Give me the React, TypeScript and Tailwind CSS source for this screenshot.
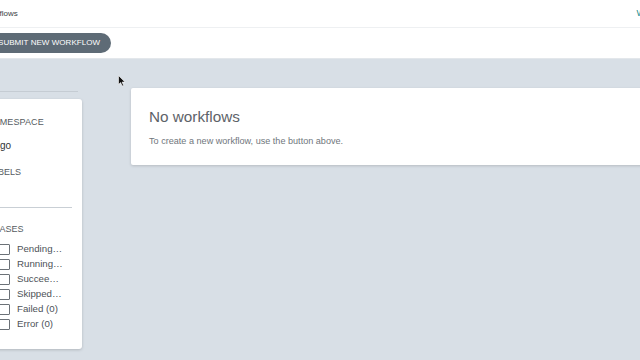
import React from "react";

const phases = ["Pending…", "Running…", "Succee…", "Skipped…", "Failed (0)", "Error (0)"];

export default function App() {
  return (
    <div
      className="relative w-[640px] h-[360px] overflow-hidden bg-[#d8dfe6] text-[#4a4f55]"
      style={{ fontFamily: '"Liberation Sans", Arial, sans-serif' }}
    >
      {/* top bar */}
      <div className="h-[28px] bg-white border-b border-[#eef0f2] flex items-center justify-between">
        <span className="ml-[-19px] text-[8px] text-[#3a3f44]">Workflows</span>
        <span className="mr-[-5px] text-[9px] text-[#1a8c8c]">W</span>
      </div>
      {/* toolbar */}
      <div className="h-[31px] bg-white flex items-center border-b border-[#e3e7eb]">
        <button className="ml-[-13px] h-[20px] px-[11px] rounded-full bg-[#5e6b76] text-white text-[8px] tracking-[0.05px] flex items-center">
          SUBMIT NEW WORKFLOW
        </button>
      </div>
      {/* content */}
      <div className="flex">
        <div className="ml-[-22px] w-[104px] flex flex-col">
          <div className="h-[33px] border-b border-[#c5ccd3] mr-[4px]" />
          <div className="mt-[7px] h-[250px] bg-white rounded-[3px] shadow-[0_1px_3px_rgba(0,0,0,0.18)] pl-[9px] pr-[10px] pt-[17px] text-[9px]">
            <div className="tracking-[0.1px] text-[#555b61]">NAMESPACE</div>
            <div className="mt-[8px] ml-[4px] text-[10px] text-[#2f3438]">argo</div>
            <div className="mt-[13px] text-[#555b61]">LABELS</div>
            <div className="mt-[28px] border-t border-[#c9cfd5]" />
            <div className="mt-[15px] text-[#555b61]">PHASES</div>
            <div className="mt-[7px] flex flex-col gap-[4px]">
              {phases.map((p) => (
                <div key={p} className="flex items-center h-[11px]">
                  <div className="ml-[12px] w-[11px] h-[11px] border border-[#6b7177] rounded-[1px] bg-white" />
                  <span className="ml-[7px] text-[9.7px] text-[#4d5257]">{p}</span>
                </div>
              ))}
            </div>
          </div>
        </div>
        <div className="ml-[49px] mt-[29px] flex-1 mr-[-20px]">
          <div className="h-[77px] bg-white rounded-[2px] shadow-[0_1px_3px_rgba(0,0,0,0.16)] pl-[18px] pt-[21px]">
            <div className="text-[15.3px] text-[#5d6268] leading-none">No workflows</div>
            <div className="mt-[11px] text-[9.1px] text-[#70767c]">To create a new workflow, use the button above.</div>
          </div>
        </div>
      </div>
      {/* cursor */}
      <svg className="absolute left-[118px] top-[75px]" width="8" height="12" viewBox="0 0 8 12">
        <path d="M0.5 0.5 L0.5 9.5 L2.6 7.6 L4.2 11 L5.6 10.4 L4.1 7.1 L7 7.1 Z" fill="#111" stroke="#fff" strokeWidth="0.6" />
      </svg>
    </div>
  );
}
